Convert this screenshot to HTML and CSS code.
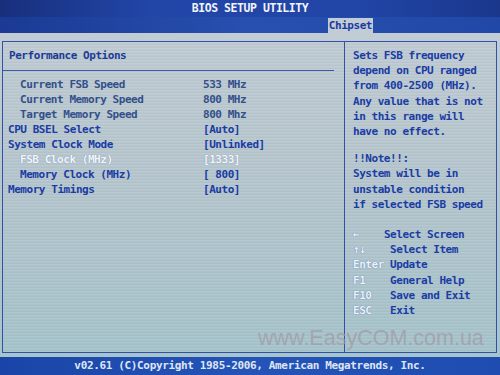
FILE: index.html
```html
<!DOCTYPE html>
<html lang="en">
<head>
    <meta charset="UTF-8">
    <meta name="viewport" content="width=device-width, initial-scale=1.0">
    <title>BIOS Setup Utility</title>
    <link rel="stylesheet" href="styles.css">
</head>
<body>
    <div class="title">BIOS SETUP UTILITY</div>
    <div class="tabs">
        <span class="tab">Chipset</span>
    </div>
    <div class="screen">
        <div class="frame">
            <div class="main">
                <div class="heading">Performance Options</div>
                <div class="rule"></div>
                <div class="row info sub"><span class="label">Current FSB Speed</span><span>533 MHz</span></div>
                <div class="row info sub"><span class="label">Current Memory Speed</span><span>800 MHz</span></div>
                <div class="row info sub"><span class="label">Target Memory Speed</span><span>800 Mhz</span></div>
                <div class="row"><span class="label">CPU BSEL Select</span><span>[Auto]</span></div>
                <div class="row"><span class="label">System Clock Mode</span><span>[Unlinked]</span></div>
                <div class="row sub selected"><span class="label">FSB Clock (MHz)</span><span>[1333]</span></div>
                <div class="row sub"><span class="label">Memory Clock (MHz)</span><span>[ 800]</span></div>
                <div class="row"><span class="label">Memory Timings</span><span>[Auto]</span></div>
            </div>
            <div class="help">
                <div class="help-text">Sets FSB frequency
depend on CPU ranged
from 400-2500 (MHz).
Any value that is not
in this range will
have no effect.</div>
                <div class="help-text note">!!Note!!:
System will be in
unstable condition
if selected FSB speed</div>
                <div class="keys"><span class="key">←</span>    Select Screen
<span class="key">↑↓</span>    Select Item
<span class="key">Enter</span> Update
<span class="key">F1</span>    General Help
<span class="key">F10</span>   Save and Exit
<span class="key">ESC</span>   Exit</div>
            </div>
        </div>
        <div class="watermark">www.EasyCOM.com.ua</div>
    </div>
    <div class="footer">v02.61 (C)Copyright 1985-2006, American Megatrends, Inc.</div>
</body>
</html>
```

FILE: styles.css
```css
body {
    margin: 0;
    width: 500px;
    height: 375px;
    overflow: hidden;
    display: flex;
    flex-direction: column;
    font-family: "DejaVu Sans Mono", "Liberation Mono", monospace;
    font-size: 11px;
    letter-spacing: -0.45px;
    font-weight: bold;
    background-color: #1d3f9e;
}
.title {
    height: 17px;
    line-height: 17px;
    background: linear-gradient(to right, #182f7c, #2146a8 30%, #2146a8 70%, #1a378c);
    color: #f2f4f8;
    text-align: center;
    font-size: 11.5px;
    letter-spacing: -0.45px;
}
.tabs {
    height: 16px;
    background: linear-gradient(to right, #1a3a94, #2850b0 50%, #2148a6);
    display: flex;
    justify-content: flex-end;
    padding-right: 127px;
}
.tabs .tab {
    background-color: #c2ccd6;
    color: #1a3aa0;
    line-height: 15px;
    margin-top: 1px;
    padding: 0 1px;
}
.screen {
    position: relative;
    flex: 1;
    padding: 8px 3px 4px 2px;
    background: linear-gradient(to bottom, #c1ccd4, #b5c6ce 50%, #a6c4cc);
}
.frame {
    height: 310px;
    border: 1px solid #3150a8;
    display: flex;
    background-image: repeating-linear-gradient(to bottom, rgba(255, 255, 255, 0.05) 0, rgba(255, 255, 255, 0.05) 1px, rgba(0, 0, 0, 0.03) 2px, rgba(0, 0, 0, 0.03) 3px);
}
.main {
    width: 341px;
    border-right: 1px solid #3150a8;
    padding-top: 6px;
}
.heading {
    line-height: 15px;
    padding-left: 6px;
    color: #1c3a96;
}
.rule {
    height: 1px;
    background-color: #3a58a8;
    margin: 7px 10px 6px 0;
}
.row {
    display: flex;
    line-height: 15px;
    padding-left: 5px;
    color: #1a3ca4;
    white-space: pre;
}
.row .label {
    width: 195px;
}
.row.sub .label {
    padding-left: 12px;
    width: 183px;
}
.row.info {
    color: #32508a;
}
.row.selected {
    color: #f2f6fa;
    text-shadow: 0 0 1px #6a7ea8;
}
.help {
    flex: 1;
    padding: 6px 0 0 8px;
    color: #1a3ca4;
    line-height: 15.2px;
}
.help .help-text,
.help .keys {
    white-space: pre;
}
.help .note {
    margin-top: 12px;
}
.help .keys {
    margin-top: 15px;
}
.help .key {
    color: #eef3fb;
    text-shadow: 0 0 1px #3a56a4;
}
.watermark {
    position: absolute;
    left: 258px;
    top: 293px;
    font-family: "Liberation Sans", Arial, sans-serif;
    font-weight: normal;
    font-size: 21.5px;
    letter-spacing: 0;
    color: rgba(160, 152, 162, 0.7);
}
.footer {
    height: 18px;
    line-height: 18px;
    background: linear-gradient(to right, #1a44a8, #2454b8 50%, #1e4cb0);
    color: #dfe6f2;
    text-align: center;
    font-size: 11px;
    letter-spacing: -0.35px;
}
```
